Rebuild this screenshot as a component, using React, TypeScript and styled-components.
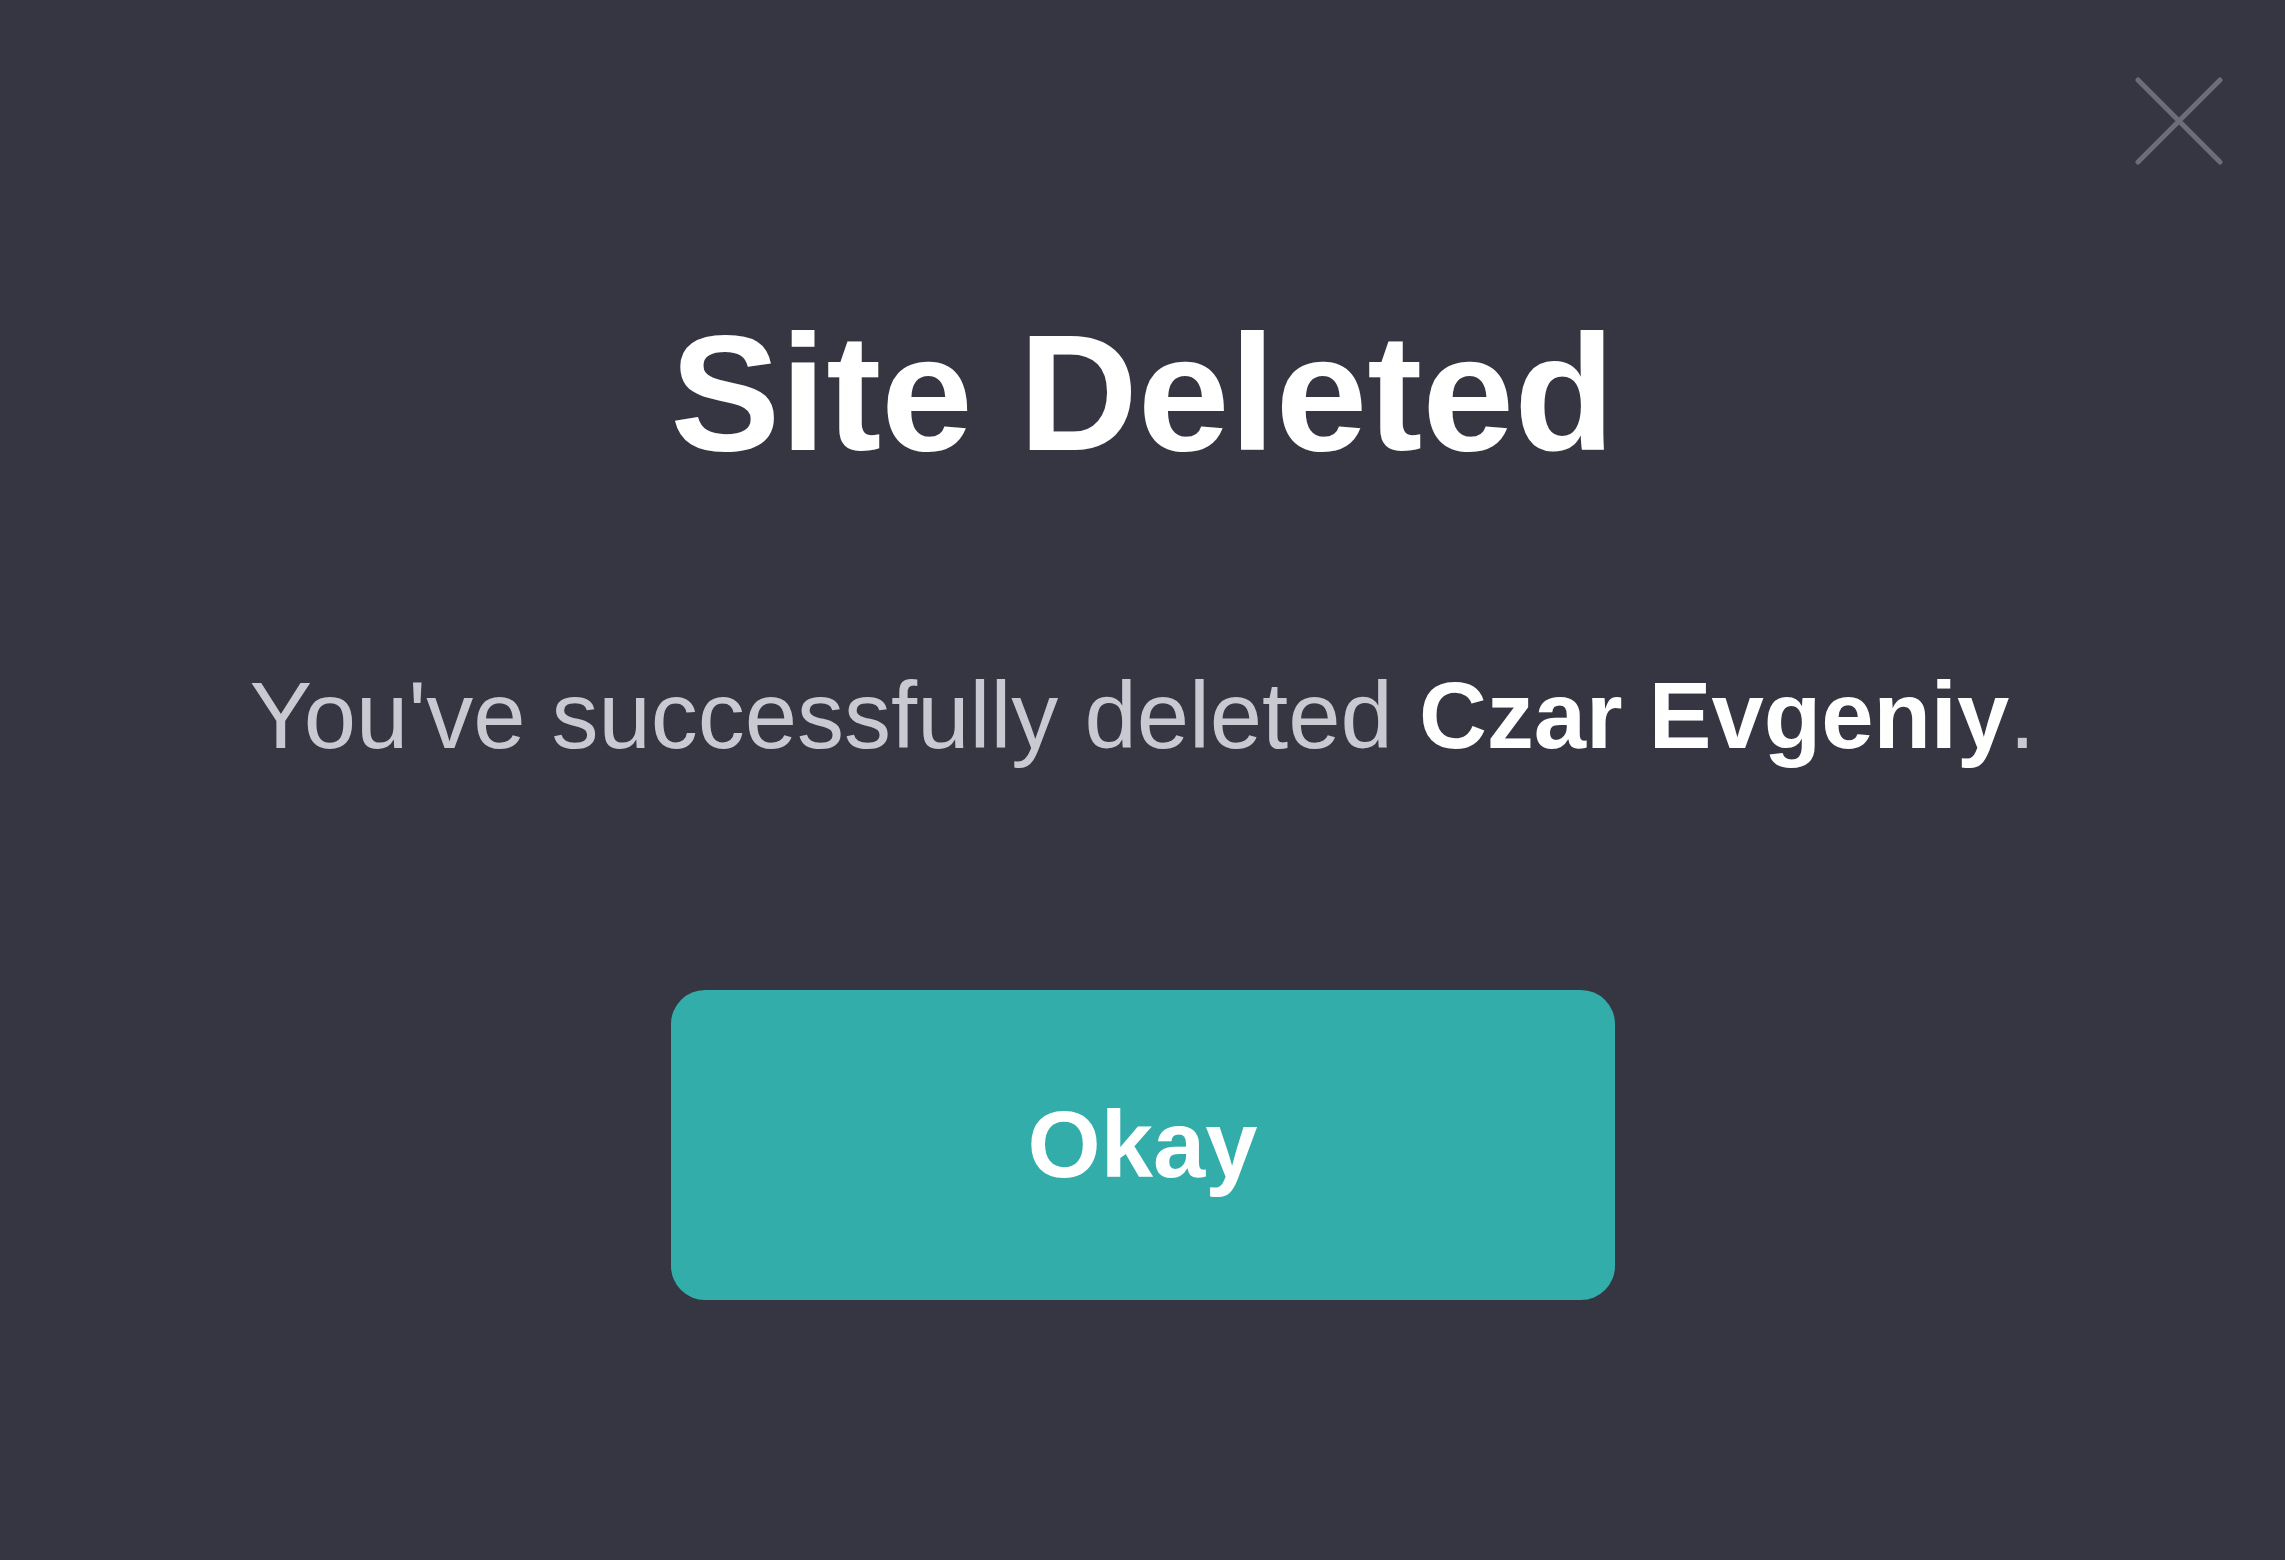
import styled, { createGlobalStyle } from 'styled-components';

const GlobalStyle = createGlobalStyle`
    html, body {
        margin:0;
        padding:0;
        background-color:#363643;
    }
    body {
        font-family:"Liberation Sans", Arial, sans-serif;
    }
`;

const Screen = styled.div`
    position:relative;
    width:2285px;
    min-height:1560px;
    box-sizing:border-box;
    padding-top:311px;
    background-color:#363643;
    display:flex;
    flex-direction:column;
    align-items:center;
`;

const CloseBtn = styled.button`
    position:absolute;
    top:77px;
    left:2135px;
    width:88px;
    height:88px;
    padding:0;
    border:none;
    background:none;
    cursor:pointer;
    svg {
        display:block;
    }
`;

const Title = styled.h1`
    margin:0;
    font-size:165px;
    line-height:1;
    font-weight:700;
    color:#ffffff;
`;

const Message = styled.p`
    margin:193px 0 0;
    font-size:94px;
    line-height:1;
    font-weight:400;
    color:#c9c9d1;
    white-space:nowrap;
`;

const Name = styled.strong`
    font-weight:700;
    color:#ffffff;
`;

const OkayBtn = styled.button`
    margin-top:227px;
    width:944px;
    height:310px;
    border:none;
    border-radius:34px;
    background-color:#33ada9;
    color:#ffffff;
    font-family:"Liberation Sans", Arial, sans-serif;
    font-size:94px;
    font-weight:700;
    line-height:1;
    display:flex;
    align-items:center;
    justify-content:center;
    cursor:pointer;
`;

function App () {
    return (
        <>
        <GlobalStyle />
        <Screen>
            <CloseBtn aria-label="close">
                <svg width="88" height="88" viewBox="0 0 88 88">
                    <path d="M3 3 L85 85 M85 3 L3 85" stroke="#6c6d79" strokeWidth="5" strokeLinecap="round" fill="none" />
                </svg>
            </CloseBtn>
            <Title>Site Deleted</Title>
            <Message>You've successfully deleted <Name>Czar Evgeniy</Name>.</Message>
            <OkayBtn>Okay</OkayBtn>
        </Screen>
        </>
    )
}

export default App;
